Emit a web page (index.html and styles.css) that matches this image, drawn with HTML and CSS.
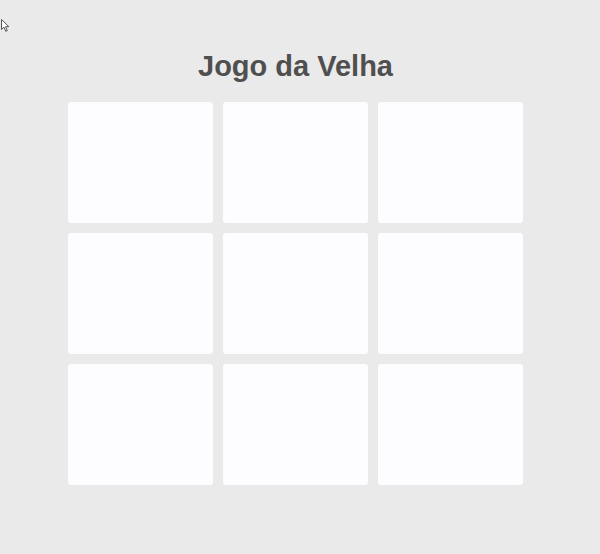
FILE: index.html
```html
<!DOCTYPE html>
<html lang="pt">
<head>
<meta charset="utf-8">
<title>Jogo da Velha</title>
<link rel="stylesheet" href="styles.css">
</head>
<body>
<svg class="cursor" width="9" height="13" viewBox="0 0 9 13"><path d="M0.5 0.5 L0.5 10.5 L3 8.2 L4.8 12.3 L6.3 11.6 L4.6 7.7 L7.9 7.7 Z" fill="#fff" stroke="#555" stroke-width="1"/></svg>
<main class="game">
  <h1 class="title">Jogo da Velha</h1>
  <div class="board">
    <div class="cell"></div>
    <div class="cell"></div>
    <div class="cell"></div>
    <div class="cell"></div>
    <div class="cell"></div>
    <div class="cell"></div>
    <div class="cell"></div>
    <div class="cell"></div>
    <div class="cell"></div>
  </div>
</main>
</body>
</html>
```
FILE: styles.css
```css
html, body {
  margin: 0;
  padding: 0;
  background: #ebeaeb;
  height: 100%;
}
body {
  font-family: "Liberation Sans", Arial, sans-serif;
}
.cursor {
  position: absolute;
  left: 1px;
  top: 19px;
}
.game {
  width: 455px;
  margin-left: 68px;
  padding-top: 50px;
}
.title {
  margin: 0 0 19px 0;
  text-align: center;
  font-size: 29px;
  line-height: 33px;
  font-weight: bold;
  color: #4f4f4f;
}
.board {
  display: grid;
  grid-template-columns: repeat(3, 145px);
  grid-template-rows: repeat(3, 121px);
  gap: 10px;
}
.cell {
  background: #fdfcfe;
  border-radius: 3px;
}
```
